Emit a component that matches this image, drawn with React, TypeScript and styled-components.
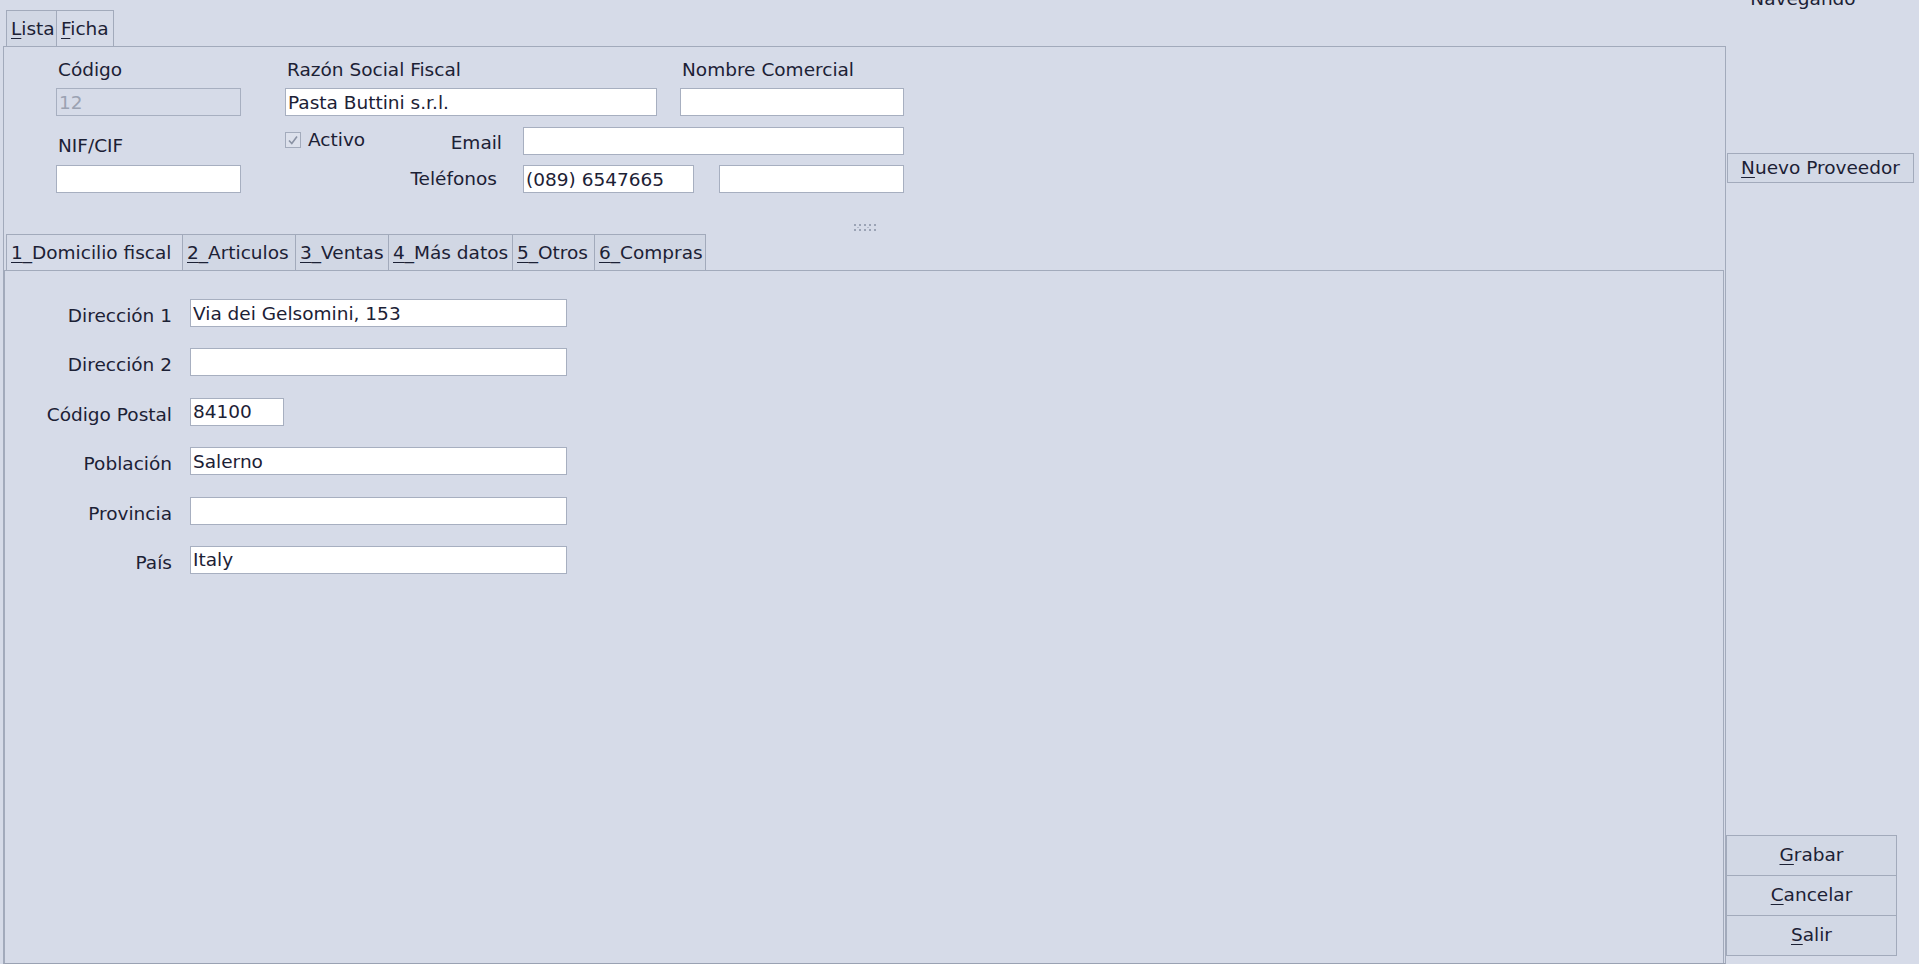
import React from "react";
import styled, { createGlobalStyle } from "styled-components";

const GlobalStyle = createGlobalStyle`
  html, body {
    margin: 0;
    padding: 0;
    background: #d6dbe8;
    overflow: hidden;
  }
  body {
    font-family: "DejaVu Sans", Verdana, sans-serif;
    font-size: 18.5px;
    color: #1c2135;
  }
  * { box-sizing: border-box; }
`;

const domicilio = [
    { label: "Dirección 1", value: "Via dei Gelsomini, 153" },
    { label: "Dirección 2", value: "" },
    { label: "Código Postal", value: "84100", short: true },
    { label: "Población", value: "Salerno" },
    { label: "Provincia", value: "" },
    { label: "País", value: "Italy" },
];

// key, rest of caption, tab width
const subTabs: [string, string, number][] = [
    ["1", "_Domicilio fiscal", 177],
    ["2", "_Articulos", 114],
    ["3", "_Ventas", 94],
    ["4", "_Más datos", 125],
    ["5", "_Otros", 83],
    ["6", "_Compras", 112],
];

const Grip = () => (
    <svg width="22" height="7" viewBox="0 0 22 7">
        {[0, 5, 10, 15, 20].map((x) => (
            <React.Fragment key={x}>
                <rect x={x} y={0} width="2" height="2" fill="#9ba3b5" />
                <rect x={x} y={5} width="2" height="2" fill="#9ba3b5" />
            </React.Fragment>
        ))}
        {[3, 13].map((x) => (
            <rect key={x} x={x} y={3} width="2" height="1" fill="#b3bacb" />
        ))}
    </svg>
);

const Check = () => (
    <svg width="12" height="12" viewBox="0 0 12 12">
        <polyline points="2,6.5 4.8,9.5 10,2.5" fill="none" stroke="#8a92a4" strokeWidth="1.6" />
    </svg>
);

const App = () => {
    return (
        <>
            <GlobalStyle />
            <Window>
                <Main>
                    <TabStrip $inset={3}>
                        <Tab $width={51}><Mn>L</Mn>ista</Tab>
                        <Tab $width={58} $selected><Mn>F</Mn>icha</Tab>
                    </TabStrip>
                    <OuterPanel>
                        <TopForm>
                            <Column $width={185} $left={52}>
                                <FieldLabel>Código</FieldLabel>
                                <TextBox $disabled $top={7} defaultValue="12" readOnly />
                                <FieldLabel $top={19}>NIF/CIF</FieldLabel>
                                <TextBox $top={8} defaultValue="" />
                            </Column>
                            <Column $width={619} $left={44}>
                                <Row>
                                    <Column $width={372}>
                                        <FieldLabel>Razón Social Fiscal</FieldLabel>
                                        <TextBox $top={7} defaultValue="Pasta Buttini s.r.l." />
                                    </Column>
                                    <Column $width={224} $left={23}>
                                        <FieldLabel>Nombre Comercial</FieldLabel>
                                        <TextBox $top={7} defaultValue="" />
                                    </Column>
                                </Row>
                                <ContactGrid>
                                    <ActivoCell>
                                        <CheckRow>
                                            <CheckBox><Check /></CheckBox>
                                            <span>Activo</span>
                                        </CheckRow>
                                        <SideLabel $top={2}>Email</SideLabel>
                                    </ActivoCell>
                                    <TextBox defaultValue="" />
                                    <SideLabel $right={5}>Teléfonos</SideLabel>
                                    <PhonePair>
                                        <TextBox defaultValue="(089) 6547665" />
                                        <TextBox defaultValue="" />
                                    </PhonePair>
                                </ContactGrid>
                            </Column>
                        </TopForm>
                        <Divider>
                            <Grip />
                        </Divider>
                        <InnerPane>
                            <TabStrip $inset={2}>
                                {subTabs.map(([key, rest, width], i) => (
                                    <Tab key={key} $width={width} $selected={i === 0}>
                                        <Mn>{key}</Mn>{rest}
                                    </Tab>
                                ))}
                            </TabStrip>
                            <InnerPanel>
                                <AddressGrid>
                                    {domicilio.map((f) => (
                                        <React.Fragment key={f.label}>
                                            <RowLabel>{f.label}</RowLabel>
                                            <AddressBox $short={f.short} defaultValue={f.value} />
                                        </React.Fragment>
                                    ))}
                                </AddressGrid>
                            </InnerPanel>
                        </InnerPane>
                    </OuterPanel>
                </Main>
                <SideBar>
                    <StatusLabel>Navegando</StatusLabel>
                    <NewButton><Mn>N</Mn>uevo Proveedor</NewButton>
                    <Spacer />
                    <ActionGroup>
                        <ActionButton><Mn>G</Mn>rabar</ActionButton>
                        <ActionButton><Mn>C</Mn>ancelar</ActionButton>
                        <ActionButton><Mn>S</Mn>alir</ActionButton>
                    </ActionGroup>
                </SideBar>
            </Window>
        </>
    );
};

const Window = styled.div`
    display: flex;
    width: 1919px;
    height: 964px;
`;

const Main = styled.div`
    width: 1726px;
    height: 964px;
    padding: 10px 0 0 3px;
    display: flex;
    flex-direction: column;
`;

const TabStrip = styled.div<{ $inset: number }>`
    display: flex;
    height: 36px;
    padding-left: ${(p) => p.$inset}px;
    flex-shrink: 0;
`;

const Tab = styled.div<{ $selected?: boolean; $width: number }>`
    width: ${(p) => p.$width}px;
    height: 36px;
    padding: 0 3px 0 4px;
    line-height: 35px;
    white-space: nowrap;
    overflow: hidden;
    border: 1px solid #a2aabb;
    border-bottom: none;
    margin-right: -1px;
    background: ${(p) => (p.$selected ? "#d6dbe8" : "#d1d7e4")};
`;

const Mn = styled.span`
    text-decoration: underline;
    text-underline-offset: 3px;
    text-decoration-thickness: 1px;
`;

const OuterPanel = styled.div`
    flex: 1;
    display: flex;
    flex-direction: column;
    border: 1px solid #a2aabb;
    border-bottom-color: #9aa2b3;
`;

const TopForm = styled.div`
    height: 173px;
    padding-top: 12px;
    display: flex;
    align-items: flex-start;
    flex-shrink: 0;
`;

const Column = styled.div<{ $width: number; $left?: number }>`
    display: flex;
    flex-direction: column;
    width: ${(p) => p.$width}px;
    margin-left: ${(p) => p.$left ?? 0}px;
`;

const Row = styled.div`
    display: flex;
`;

const FieldLabel = styled.div<{ $top?: number }>`
    line-height: 22px;
    padding-left: 2px;
    margin-top: ${(p) => p.$top ?? 0}px;
    white-space: nowrap;
`;

const TextBox = styled.input<{ $top?: number; $disabled?: boolean }>`
    display: block;
    width: 100%;
    height: 28px;
    margin: ${(p) => p.$top ?? 0}px 0 0 0;
    padding: 0 2px;
    border: 1px solid #a7afc0;
    outline: none;
    font: inherit;
    color: ${(p) => (p.$disabled ? "#9ba2b2" : "#1c2135")};
    background: ${(p) => (p.$disabled ? "#d6dbe8" : "#ffffff")};
`;

const ContactGrid = styled.div`
    display: grid;
    grid-template-columns: 217px 381px;
    grid-template-rows: 28px 28px;
    column-gap: 21px;
    row-gap: 10px;
    margin-top: 11px;
`;

const ActivoCell = styled.div`
    height: 28px;
    display: flex;
    justify-content: space-between;
    align-items: flex-start;
`;

const CheckRow = styled.label`
    display: flex;
    align-items: center;
    gap: 7px;
    margin-top: 3px;
    line-height: 20px;
`;

const CheckBox = styled.span`
    width: 16px;
    height: 16px;
    border: 1px solid #a3abbc;
    background: #dde1ec;
    display: flex;
    align-items: center;
    justify-content: center;
`;

const SideLabel = styled.div<{ $top?: number; $right?: number }>`
    text-align: right;
    line-height: 28px;
    margin-top: ${(p) => p.$top ?? 0}px;
    padding-right: ${(p) => p.$right ?? 0}px;
    white-space: nowrap;
`;

const PhonePair = styled.div`
    display: grid;
    grid-template-columns: 171px 185px;
    column-gap: 25px;
`;

const Divider = styled.div`
    height: 14px;
    display: flex;
    align-items: center;
    justify-content: center;
    flex-shrink: 0;
`;

const InnerPane = styled.div`
    flex: 1;
    display: flex;
    flex-direction: column;
    margin: 0 1px 0 0;
`;

const InnerPanel = styled.div`
    flex: 1;
    border: 1px solid #a2aabb;
    border-bottom: none;
    padding-top: 28px;
`;

const AddressGrid = styled.div`
    display: grid;
    grid-template-columns: 167px 377px;
    column-gap: 18px;
    row-gap: 21.4px;
`;

const RowLabel = styled.div`
    text-align: right;
    line-height: 28px;
    margin: 3px 0 -3px;
    white-space: nowrap;
`;

const AddressBox = styled(TextBox)<{ $short?: boolean }>`
    width: ${(p) => (p.$short ? "94px" : "377px")};
`;

const SideBar = styled.div`
    width: 193px;
    height: 964px;
    display: flex;
    flex-direction: column;
`;

const StatusLabel = styled.div`
    width: 154px;
    margin-top: -12px;
    text-align: center;
    line-height: 22px;
`;

const NewButton = styled.div`
    width: 187px;
    height: 30px;
    margin: 143px 0 0 1px;
    border: 1px solid #a2aabb;
    background: #d3d9e6;
    text-align: center;
    line-height: 28px;
    white-space: nowrap;
`;

const Spacer = styled.div`
    flex: 1;
`;

const ActionGroup = styled.div`
    width: 171px;
    display: flex;
    flex-direction: column;
    margin-bottom: 8px;
`;

const ActionButton = styled.div`
    height: 41px;
    margin-top: -1px;
    border: 1px solid #a2aabb;
    background: #d2d8e5;
    text-align: center;
    line-height: 38px;
`;

export default App;
